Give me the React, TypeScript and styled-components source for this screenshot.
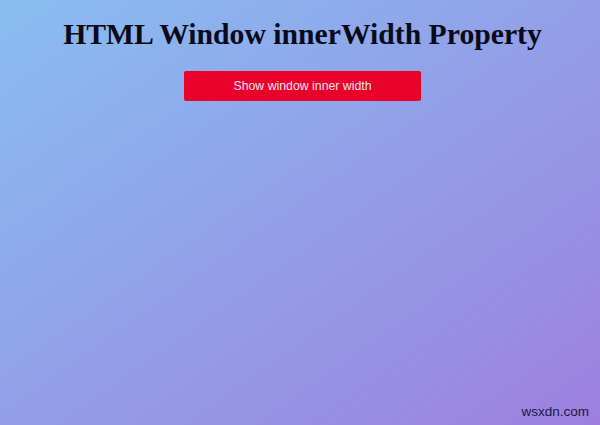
import React from "react";
import styled, { createGlobalStyle } from "styled-components";

const Global = createGlobalStyle`
  html, body { margin: 0; padding: 0; height: 100%; }
  #root { height: 100%; }
`;

const Page = styled.div`
  position: relative;
  box-sizing: border-box;
  width: 600px;
  height: 425px;
  padding-left: 5px;
  background: linear-gradient(to bottom right, #88bef0 0%, #9d80e0 100%);
  display: flex;
  flex-direction: column;
  align-items: center;
  overflow: hidden;
`;

const Title = styled.h1`
  margin: 17px 0 0 0;
  font-family: "Liberation Serif", "Times New Roman", serif;
  font-weight: bold;
  font-size: 29.7px;
  line-height: 34px;
  color: #0a0a1a;
`;

const Button = styled.button`
  margin-top: 20px;
  width: 237px;
  height: 30px;
  border: none;
  border-radius: 2px;
  background: #e9002b;
  color: #f4e4ec;
  font-family: "Liberation Sans", Arial, sans-serif;
  font-size: 12.3px;
  cursor: pointer;
`;

const Watermark = styled.div`
  position: absolute;
  right: 11px;
  bottom: 6px;
  font-family: "Liberation Sans", Arial, sans-serif;
  font-size: 13.5px;
  color: #1c1840;
`;

export default function App() {
  return (
    <>
      <Global />
      <Page>
        <Title>HTML Window innerWidth Property</Title>
        <Button>Show window inner width</Button>
        <Watermark>wsxdn.com</Watermark>
      </Page>
    </>
  );
}
